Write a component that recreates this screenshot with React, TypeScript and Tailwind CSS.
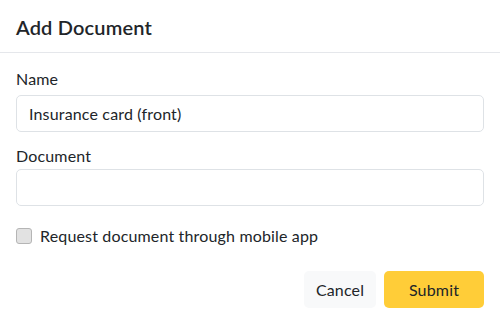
import { useState } from 'react';

export default function App() {
  const [name, setName] = useState('Insurance card (front)');
  const [doc, setDoc] = useState('');
  const [viaApp, setViaApp] = useState(false);

  return (
    <div className="w-[500px] h-[324px] bg-white text-[#212529] tracking-[0.01em] font-['Lato','Liberation_Sans',sans-serif]">
      {/* Header */}
      <div className="h-[53px] flex items-center px-4 pt-[2px] border-b border-[#e5e7eb]">
        <h5 className="text-[20px] font-semibold leading-6 text-[#222529]">Add Document</h5>
      </div>

      {/* Body */}
      <div className="px-4 pt-[14px]">
        <label className="block text-base leading-6 mb-1">Name</label>
        <input
          value={name}
          onChange={(e) => setName(e.target.value)}
          className="w-full h-[37px] px-3 text-base border border-[#dee2e6] rounded-[5px] outline-none"
        />

        <label className="block text-base leading-6 mt-3 mb-[1px]">Document</label>
        <input
          value={doc}
          onChange={(e) => setDoc(e.target.value)}
          className="w-full h-[37px] px-3 text-base border border-[#dee2e6] rounded-[5px] outline-none"
        />

        <label className="flex items-center gap-2 mt-[18px] text-base leading-6 cursor-pointer">
          <input
            type="checkbox"
            checked={viaApp}
            onChange={(e) => setViaApp(e.target.checked)}
            className="appearance-none w-4 h-4 rounded-[3px] border border-[#b5b5b5] bg-[#e2e2e2]"
          />
          <span>Request document through mobile app</span>
        </label>
      </div>

      {/* Footer */}
      <div className="flex justify-end gap-2 px-4 mt-[23px]">
        <button className="w-[72px] h-[37px] rounded-[5px] bg-[#f8f9fa] text-base text-[#212529]">Cancel</button>
        <button className="w-[100px] h-[37px] rounded-[5px] bg-[#ffcd38] text-base text-[#212529]">Submit</button>
      </div>
    </div>
  );
}
